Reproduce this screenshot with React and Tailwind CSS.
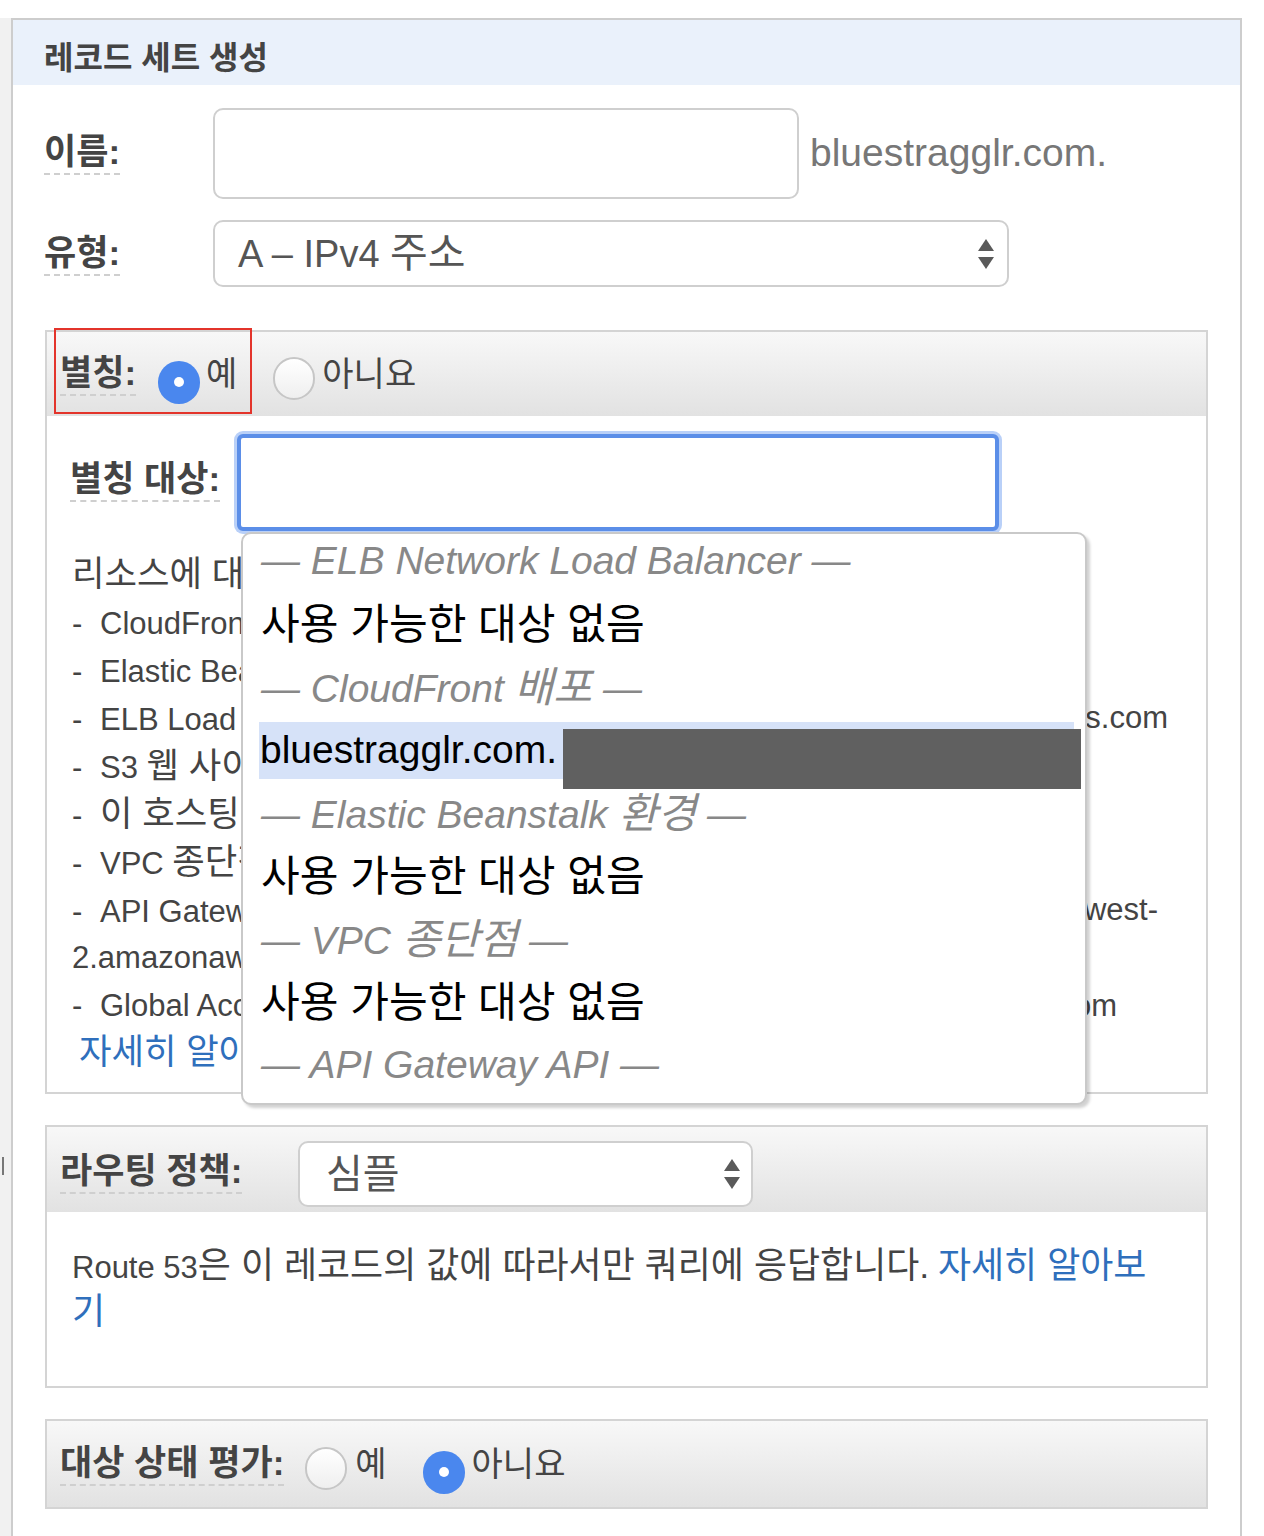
import React from "react";

function K({ children, s = "text-[1.14em]" }) {
  return <span className={s}>{children}</span>;
}

function Radio({ checked }) {
  if (checked) {
    return (
      <span className="inline-flex w-[42px] h-[43px] shrink-0 rounded-full bg-[#4a87ee] items-center justify-center">
        <span className="w-[10px] h-[10px] rounded-full bg-white" />
      </span>
    );
  }
  return (
    <span className="inline-block w-[42px] h-[43px] shrink-0 rounded-full border-2 border-[#c6c6c6] bg-gradient-to-b from-white to-[#efefef]" />
  );
}

function Arrows() {
  return (
    <svg width="18" height="34" viewBox="0 0 18 34">
      <path d="M9 2 L17 14 H1 Z" fill="#5a5a5a" />
      <path d="M1 20 H17 L9 32 Z" fill="#5a5a5a" />
    </svg>
  );
}

function Label({ children, className = "" }) {
  return (
    <span
      className={
        "inline-block font-bold text-[#444] text-[35px] leading-[42px] border-b-2 border-dashed border-[#cfcfcf] " +
        className
      }
    >
      {children}
    </span>
  );
}

function Line({ children }) {
  return <div className="h-[48px] leading-[48px] whitespace-nowrap">{children}</div>;
}

function Dash() {
  return <span className="inline-block w-[28px]">-</span>;
}

function Head({ children }) {
  return (
    <div className="h-[63px] flex items-center pl-[18px] italic text-[#888] whitespace-nowrap">
      <span>{children}</span>
    </div>
  );
}

function None() {
  return (
    <div className="h-[63px] flex items-center pl-[18px] text-black whitespace-nowrap">
      <K s="text-[1.08em]">사용 가능한 대상 없음</K>
    </div>
  );
}

export default function App() {
  return (
    <div className="w-[1264px] h-[1536px] overflow-hidden bg-white pt-[18px] font-['Liberation_Sans','Noto_Sans_CJK_KR',sans-serif]">
      <div className="flex h-full">
        {/* left strip */}
        <div className="w-[11px] shrink-0 bg-[#f1f1f1] flex flex-col">
          <div className="h-[1139px]" />
          <div className="ml-[2px] w-[2px] h-[18px] bg-[#777]" />
        </div>

        {/* main panel */}
        <div className="w-[1231px] shrink-0 border-2 border-b-0 border-[#cdcdcd] flex flex-col">
          <div className="h-[65px] bg-[#eaf1fb] flex items-center pl-[31px] pt-[10px]">
            <span className="font-bold text-[32px] text-[#444]">레코드 세트 생성</span>
          </div>

          <div className="pl-[31px] pt-[23px]">
            {/* name row */}
            <div className="flex items-center">
              <div className="w-[169px] shrink-0 pb-[2px]">
                <Label>이름:</Label>
              </div>
              <div className="w-[586px] h-[91px] rounded-[10px] border-2 border-[#cfcfcf] bg-white" />
              <span className="ml-[11px] text-[39px] text-[#777]">bluestragglr.com.</span>
            </div>

            {/* type row */}
            <div className="flex items-center mt-[21px]">
              <div className="w-[169px] shrink-0">
                <Label>유형:</Label>
              </div>
              <div className="w-[796px] h-[67px] rounded-[10px] border-2 border-[#cfcfcf] bg-white flex items-center justify-between pl-[23px] pr-[12px]">
                <span className="text-[38px] text-[#555]">
                  A – IPv4 <K s="text-[1.08em]">주소</K>
                </span>
                <Arrows />
              </div>
            </div>

            {/* alias box */}
            <div className="relative mt-[43px] ml-[1px] w-[1163px] border-2 border-[#d4d4d4]">
              <div className="h-[84px] bg-gradient-to-b from-[#f8f8f8] to-[#e2e2e2] flex items-center pl-[13px]">
                <Label>별칭:</Label>
                <span className="ml-[22px] mt-[16px]">
                  <Radio checked />
                </span>
                <span className="ml-[6px] text-[34px] text-[#444]">예</span>
                <span className="ml-[36px] mt-[16px]">
                  <Radio />
                </span>
                <span className="ml-[7px] text-[34px] text-[#444]">아니요</span>
              </div>

              {/* red highlight */}
              <div className="absolute left-[7px] top-[-4px] w-[198px] h-[86px] border-2 border-[#e3342b]" />

              <div className="pl-[23px] pt-[18px] pb-[18px] text-[31px] text-[#444]">
                <div className="flex items-center">
                  <div className="w-[167px] shrink-0 pb-[2px]">
                    <Label>별칭 대상:</Label>
                  </div>
                  <div className="w-[762px] h-[97px] rounded-[6px] border-[4px] border-[#5b8ee8] shadow-[0_0_0_3px_#b9d0f8] bg-white" />
                </div>

                <div className="mt-[19px] pl-[2px]">
                  <Line>
                    <K>리소스에 대한 도메인 이름을 입력할 수도 있습니다. 예:</K>
                  </Line>
                  <Line>
                    <Dash />CloudFront <K>배포 도메인 이름</K>
                  </Line>
                  <Line>
                    <Dash />Elastic Beanstalk <K>환경</K> CNAME
                  </Line>
                  <div className="h-[48px] leading-[48px] whitespace-nowrap flex justify-between w-[1096px]">
                    <span>
                      <Dash />ELB Load Balancer DNS <K>이름</K>
                    </span>
                    <span>elb.amazonaws.com</span>
                  </div>
                  <Line>
                    <Dash />S3 <K>웹 사이트 엔드포인트</K>
                  </Line>
                  <Line>
                    <Dash />
                    <K>이 호스팅 영역의 레코드 세트</K>
                  </Line>
                  <Line>
                    <Dash />VPC <K>종단점</K>
                  </Line>
                  <div className="h-[48px] leading-[48px] whitespace-nowrap flex justify-between w-[1086px]">
                    <span>
                      <Dash />API Gateway <K>사용자 지정 리전</K> API
                    </span>
                    <span>execute-api.us-west-</span>
                  </div>
                  <Line>2.amazonaws.com</Line>
                  <div className="h-[48px] leading-[48px] whitespace-nowrap flex justify-between w-[1045px]">
                    <span>
                      <Dash />Global Accelerator
                    </span>
                    <span>awsglobalaccelerator.com</span>
                  </div>
                  <div className="h-[44px] leading-[44px] whitespace-nowrap pl-[7px] text-[#2f6fbc]">
                    <K>자세히 알아보기</K>
                  </div>
                </div>
              </div>

              {/* dropdown */}
              <div className="absolute left-[194px] top-[200px] w-[846px] h-[573px] rounded-[10px] border-2 border-[#c9c9c9] bg-white shadow-[3px_3px_3px_rgba(0,0,0,0.18)] text-[39px] overflow-hidden">
                <div className="-mt-[4px]">
                  <Head>— ELB Network Load Balancer —</Head>
                  <None />
                  <Head>
                    — CloudFront <K s="text-[1.08em]">배포</K> —
                  </Head>
                  <div className="relative h-[63px] flex items-center pl-[16px]">
                    <div className="w-[815px] h-[57px] bg-[#d6e2f8] flex items-center pl-[1px] text-black whitespace-nowrap">
                      bluestragglr.com.
                    </div>
                    <div className="absolute left-[320px] top-[10px] w-[518px] h-[60px] bg-[#606060]" />
                  </div>
                  <Head>
                    — Elastic Beanstalk <K s="text-[1.08em]">환경</K> —
                  </Head>
                  <None />
                  <Head>
                    — VPC <K s="text-[1.08em]">종단점</K> —
                  </Head>
                  <None />
                  <Head>— API Gateway API —</Head>
                </div>
              </div>
            </div>

            {/* routing box */}
            <div className="mt-[31px] ml-[1px] w-[1163px] border-2 border-[#d4d4d4]">
              <div className="h-[85px] bg-gradient-to-b from-[#f8f8f8] to-[#e2e2e2] flex items-center pl-[13px]">
                <div className="w-[238px] shrink-0 pt-[4px]">
                  <Label>라우팅 정책:</Label>
                </div>
                <div className="self-start mt-[14px] w-[455px] h-[66px] rounded-[10px] border-2 border-[#cfcfcf] bg-white flex items-center justify-between pl-[26px] pr-[10px]">
                  <span className="text-[40px] text-[#555]">심플</span>
                  <Arrows />
                </div>
              </div>
              <div className="h-[174px] pl-[25px] pt-[31px] text-[31px] text-[#444]">
                <div className="h-[46px] leading-[46px] whitespace-nowrap">
                  Route 53<K s="text-[1.16em]">은 이 레코드의 값에 따라서만 쿼리에 응답합니다.</K>{" "}
                  <span className="text-[#2f6fbc]">
                    <K s="text-[1.16em]">자세히 알아보</K>
                  </span>
                </div>
                <div className="h-[46px] leading-[46px] whitespace-nowrap text-[#2f6fbc]">
                  <K s="text-[1.16em]">기</K>
                </div>
              </div>
            </div>

            {/* health box */}
            <div className="mt-[31px] ml-[1px] w-[1163px] border-2 border-[#d4d4d4]">
              <div className="h-[86px] bg-gradient-to-b from-[#f8f8f8] to-[#e2e2e2] flex items-center pl-[13px]">
                <Label>대상 상태 평가:</Label>
                <span className="ml-[21px] mt-[16px]">
                  <Radio />
                </span>
                <span className="ml-[8px] text-[34px] text-[#444]">예</span>
                <span className="ml-[36px] mt-[16px]">
                  <Radio checked />
                </span>
                <span className="ml-[7px] text-[34px] text-[#444]">아니요</span>
              </div>
            </div>
          </div>
        </div>
      </div>
    </div>
  );
}
